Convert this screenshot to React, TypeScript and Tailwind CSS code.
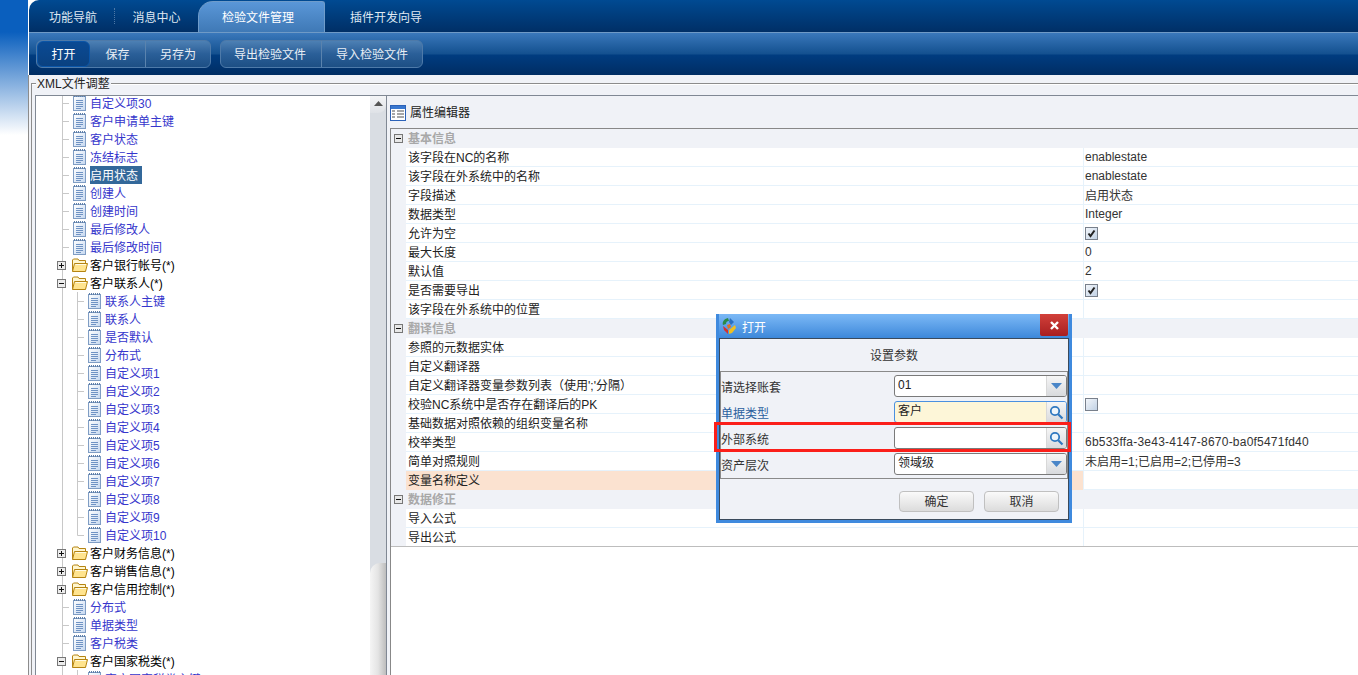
import React from "react";

const Note = () => (
  <svg width="14" height="16" viewBox="0 0 14 16" className="shrink-0">
    <defs>
      <linearGradient id="ng" x1="0" y1="0" x2="1" y2="1">
        <stop offset="0" stopColor="#ffffff" />
        <stop offset="1" stopColor="#c5d8f0" />
      </linearGradient>
    </defs>
    <rect x="0.5" y="1.5" width="12" height="14" fill="url(#ng)" stroke="#7f9dc4" />
    <path d="M1 1h11" stroke="#5f7fa8" strokeDasharray="1 1" strokeWidth="2" />
    <path d="M3 5.5h7M3 7.5h7M3 9.5h7M3 11.5h7M3 13.5h5" stroke="#6f93c4" />
  </svg>
);

const Folder = () => (
  <svg width="16" height="14" viewBox="0 0 16 14" className="shrink-0">
    <path d="M0.5 13 V2 L1.5 1 H6 L7 2.5 H13.5 V13 Z" fill="#fff6cf" stroke="#b58412" />
    <path d="M0.5 13.5 L2.5 5.5 H15.5 L13.5 13.5 Z" fill="#ffe48f" stroke="#b58412" />
    <path d="M3.5 6.5 H14" stroke="#fffbe6" />
  </svg>
);

const Box = ({ open, size = 9 }: { open?: boolean; size?: number }) => (
  <svg width={size} height={size} viewBox="0 0 9 9" className="shrink-0">
    <rect x="0.5" y="0.5" width="8" height="8" fill="#e8e8e8" stroke="#777" />
    <path d="M2 4.5h5" stroke="#111" />
    {!open && <path d="M4.5 2v5" stroke="#111" />}
  </svg>
);

type Kind = "leaf2" | "leaf3" | "leaf3end" | "plus" | "minus";

const Gutter = ({ kind }: { kind: Kind }) => {
  const w = kind === "leaf2" ? 37 : kind === "plus" || kind === "minus" ? 36 : 52;
  return (
    <svg width={w} height="18" className="shrink-0">
      <path d="M26.5 0V18" stroke="#c8c8c8" />
      {kind === "leaf2" && <path d="M26 9.5h7" stroke="#c8c8c8" />}
      {kind === "leaf3" && <path d="M41.5 0V18M41 9.5h7" stroke="#c8c8c8" />}
      {kind === "leaf3end" && <path d="M41.5 0V9.5H48" stroke="#c8c8c8" fill="none" />}
      {(kind === "plus" || kind === "minus") && (
        <g transform="translate(21,5)">
          <rect x="0.5" y="0.5" width="8" height="8" fill="#ececec" stroke="#777" />
          <path d="M2 4.5h5" stroke="#111" />
          {kind === "plus" && <path d="M4.5 2v5" stroke="#111" />}
        </g>
      )}
    </svg>
  );
};

const tree: { k: Kind; t: string; star?: boolean; sel?: boolean }[] = [
  { k: "leaf2", t: "自定义项30" },
  { k: "leaf2", t: "客户申请单主键" },
  { k: "leaf2", t: "客户状态" },
  { k: "leaf2", t: "冻结标志" },
  { k: "leaf2", t: "启用状态", sel: true },
  { k: "leaf2", t: "创建人" },
  { k: "leaf2", t: "创建时间" },
  { k: "leaf2", t: "最后修改人" },
  { k: "leaf2", t: "最后修改时间" },
  { k: "plus", t: "客户银行帐号", star: true },
  { k: "minus", t: "客户联系人", star: true },
  { k: "leaf3", t: "联系人主键" },
  { k: "leaf3", t: "联系人" },
  { k: "leaf3", t: "是否默认" },
  { k: "leaf3", t: "分布式" },
  { k: "leaf3", t: "自定义项1" },
  { k: "leaf3", t: "自定义项2" },
  { k: "leaf3", t: "自定义项3" },
  { k: "leaf3", t: "自定义项4" },
  { k: "leaf3", t: "自定义项5" },
  { k: "leaf3", t: "自定义项6" },
  { k: "leaf3", t: "自定义项7" },
  { k: "leaf3", t: "自定义项8" },
  { k: "leaf3", t: "自定义项9" },
  { k: "leaf3end", t: "自定义项10" },
  { k: "plus", t: "客户财务信息", star: true },
  { k: "plus", t: "客户销售信息", star: true },
  { k: "plus", t: "客户信用控制", star: true },
  { k: "leaf2", t: "分布式" },
  { k: "leaf2", t: "单据类型" },
  { k: "leaf2", t: "客户税类" },
  { k: "minus", t: "客户国家税类", star: true },
  { k: "leaf3", t: "客户国家税类主键" },
];

const TreeRow = ({ k, t, star, sel }: (typeof tree)[number]) => {
  const folder = k === "plus" || k === "minus";
  return (
    <div className="flex h-[18px] items-center whitespace-nowrap">
      <Gutter kind={k} />
      {folder ? <Folder /> : <Note />}
      <span
        className={
          folder
            ? "ml-[2px] h-[18px] leading-[20px] text-black"
            : sel
            ? "ml-[3px] h-[18px] bg-[#33689a] pr-[4px] leading-[20px] text-white"
            : "ml-[3px] h-[18px] leading-[20px] text-[#3636cc]"
        }
      >
        {t}
        {star ? "(*)" : ""}
      </span>
    </div>
  );
};

type Prop =
  | { s: string }
  | { n: string; v?: string; c?: boolean; off?: boolean; sel?: boolean };

const props: Prop[] = [
  { s: "基本信息" },
  { n: "该字段在NC的名称", v: "enablestate" },
  { n: "该字段在外系统中的名称", v: "enablestate" },
  { n: "字段描述", v: "启用状态" },
  { n: "数据类型", v: "Integer" },
  { n: "允许为空", c: true },
  { n: "最大长度", v: "0" },
  { n: "默认值", v: "2" },
  { n: "是否需要导出", c: true },
  { n: "该字段在外系统中的位置" },
  { s: "翻译信息" },
  { n: "参照的元数据实体" },
  { n: "自定义翻译器" },
  { n: "自定义翻译器变量参数列表（使用';'分隔）" },
  { n: "校验NC系统中是否存在翻译后的PK", off: true },
  { n: "基础数据对照依赖的组织变量名称" },
  { n: "校举类型", v: "6b533ffa-3e43-4147-8670-ba0f5471fd40" },
  { n: "简单对照规则", v: "未启用=1;已启用=2;已停用=3" },
  { n: "变量名称定义", sel: true },
  { s: "数据修正" },
  { n: "导入公式" },
  { n: "导出公式" },
];

const Check = ({ on }: { on?: boolean }) => (
  <svg width="13" height="13" viewBox="0 0 13 13">
    <defs>
      <linearGradient id="cg" x1="0" y1="0" x2="1" y2="1">
        <stop offset="0" stopColor="#f4f7fb" />
        <stop offset="1" stopColor="#bfd0e4" />
      </linearGradient>
    </defs>
    <rect x="0.5" y="0.5" width="12" height="12" fill="url(#cg)" stroke="#78808c" />
    {on && <path d="M3.5 6.5l2 2.5 4-5.5" fill="none" stroke="#222" strokeWidth="2" />}
  </svg>
);

const valueClass = (v?: string) => {
  if (!v) return "";
  if (v.startsWith("6b533")) return "tracking-[0.22px]";
  if (/[\u4e00-\u9fff]/.test(v)) return "h-[18px] leading-[20px]";
  return "";
};

const PropRow = ({ p }: { p: Prop }) => {
  if ("s" in p) {
    return (
      <div className="flex h-[19px] items-center bg-[#f0f2f7]">
        <span className="ml-[3px] flex w-[13px]">
          <Box open />
        </span>
        <span className="ml-[1px] font-bold text-[#a8a8a8]">{p.s}</span>
      </div>
    );
  }
  return (
    <div className="flex h-[19px]">
      <div className="w-[15px] shrink-0 bg-[#f0f2f7]" />
      <div
        className={
          p.sel
            ? "w-[677px] shrink-0 bg-[#fbe2d0] pl-[2px] leading-[20px] text-[#222]"
            : "w-[677px] shrink-0 border-b border-[#e6f2fb] pl-[2px] leading-[20px] text-[#222]"
        }
      >
        {p.n}
      </div>
      <div className="flex flex-1 items-center border-b border-l border-[#e6f2fb] pl-[1px] leading-[18px] text-[#333]">
        {p.c ? <Check on /> : p.off ? <Check /> : <span className={valueClass(p.v)}>{p.v}</span>}
      </div>
    </div>
  );
};

const Triangle = () => (
  <svg width="11" height="6" viewBox="0 0 11 6">
    <path d="M0 0h11L5.5 6z" fill="#4a86c8" />
  </svg>
);
const Lens = () => (
  <svg width="15" height="15" viewBox="0 0 15 15" fill="none">
    <circle cx="6" cy="6" r="4.2" stroke="#2f78c0" strokeWidth="1.8" fill="#eef5fb" />
    <path d="M9.2 9.2l4.3 4.3" stroke="#2f78c0" strokeWidth="2.2" />
  </svg>
);

const Field = ({
  label,
  value,
  btn,
  hl,
  link,
}: {
  label: string;
  value?: string;
  btn: "drop" | "find";
  hl?: boolean;
  link?: boolean;
}) => (
  <div className="flex h-[26px] items-center">
    <span className={link ? "mt-[4px] w-[173px] shrink-0 text-[#2b5f9e]" : "mt-[4px] w-[173px] shrink-0 text-[#333]"}>
      {label}
    </span>
    <div
      className={
        hl
          ? "flex h-[22px] w-[173px] overflow-hidden rounded-[3px] border border-[#4a90e0] bg-[#fdf6d8]"
          : "flex h-[22px] w-[173px] overflow-hidden rounded-[3px] border border-[#7a7a7a] bg-white"
      }
    >
      <span className="flex-1 pl-[3px] leading-[18px] text-[#222]">{value}</span>
      <span className="flex w-[20px] items-center justify-center border-l border-[#d8d8d8] bg-gradient-to-b from-[#f6f6f6] to-[#d8dadd]">
        {btn === "drop" ? <Triangle /> : <Lens />}
      </span>
    </div>
  </div>
);

const Logo = () => (
  <svg width="15" height="16" viewBox="0 0 15 16">
    <path d="M6 0C2 1 0 4 1 7l3-1C4 4 5 3 7 3z" fill="#2a8a4a" />
    <path d="M8 0l4 4-3 3-2-3z" fill="#2a6fc0" />
    <path d="M1 8l5 4v4L2 12z" fill="#d8302a" />
    <path d="M7 12l6-5 1 3-4 5-3 1z" fill="#f0c020" />
    <path d="M5 7l3-1 1 3-3 2z" fill="#e07020" />
  </svg>
);

export default function App() {
  return (
    <div className="flex h-[675px] w-[1358px] overflow-hidden bg-white font-['Liberation_Sans','Noto_Sans_CJK_SC',sans-serif] text-[12px]">
      <div className="h-[140px] w-[28px] shrink-0 bg-[linear-gradient(#0a5fbe_0,#0a5fbe_32px,#ffffff_135px)]" />
      <div className="flex min-w-0 flex-1 flex-col">
        {/* tabs */}
        <div className="ml-[1px] flex h-[32px] shrink-0 items-end rounded-tl-[10px] bg-gradient-to-b from-[#004a92] to-[#002f66] text-[#dfe8f2]">
          <div className="flex h-[32px] w-[85px] items-center justify-end pr-[17px] pt-[3px]">功能导航</div>
          <div className="h-[16px] self-center border-l border-dotted border-[#4d78a6]" />
          <div className="flex h-[32px] w-[83px] items-center justify-center pt-[3px]">消息中心</div>
          <div className="flex h-[31px] w-[127px] items-center justify-center rounded-tl-[15px] rounded-tr-[3px] border-x border-t border-[#6f9cca] bg-gradient-to-b from-[#5a97d8] to-[#3f79b6] pr-[7px] pt-[2px] text-white">
            检验文件管理
          </div>
          <div className="flex h-[32px] items-center pl-[25px] pt-[3px]">插件开发向导</div>
        </div>
        {/* toolbar */}
        <div className="ml-[1px] flex h-[43px] shrink-0 items-start gap-[9px] border-t border-[#6f9ac6] bg-[linear-gradient(#3a78bb_0,#13508f_21px,#003c80_22px,#002d63_100%)] pl-[7px] pt-[7px] text-[#e8eef5]">
          <div className="flex h-[28px] overflow-hidden rounded-[6px] border border-[#4e7aa9] bg-gradient-to-b from-[#4d80b4] via-[#2a5f98] to-[#1d4f85]">
            <div className="flex w-[53px] items-center justify-center rounded-[6px] border border-[#0a55a8] bg-gradient-to-b from-[#0a4a94] to-[#0a4180] pt-[1px] text-white">打开</div>
            <div className="flex w-[55px] items-center justify-center pt-[2px]">保存</div>
            <div className="flex w-[65px] items-center justify-center border-l border-[#5a83ae] pt-[2px]">另存为</div>
          </div>
          <div className="flex h-[28px] overflow-hidden rounded-[6px] border border-[#4e7aa9] bg-gradient-to-b from-[#4d80b4] via-[#2a5f98] to-[#1d4f85]">
            <div className="flex w-[100px] items-center justify-center pr-[2px] pt-[2px]">导出检验文件</div>
            <div className="flex w-[101px] items-center justify-center border-l border-[#5a83ae] pt-[2px]">导入检验文件</div>
          </div>
        </div>
        {/* body */}
        <div className="flex min-h-0 flex-1 flex-col border-l border-[#8c8c8c] bg-[#f0f2f7] pl-[2px] pt-[8px]">
          <div className="relative flex min-h-0 flex-1 flex-col border-l border-t border-[#8c8c8c] pl-[3px] pt-[11px] shadow-[inset_0_1px_0_#ffffff]">
            <span className="absolute left-[4px] top-[-7px] bg-[#f0f2f7] px-[1px] text-[12px] leading-[14px] text-[#222]">XML文件调整</span>
            <div className="flex min-h-0 flex-1 border-l border-t border-[#808894]">
              {/* tree */}
              <div className="flex w-[351px] shrink-0 border-r border-[#808894] bg-white">
                <div className="min-w-0 flex-1 overflow-hidden">
                  <div className="mt-[-2px]">
                    {tree.map((r, i) => (
                      <TreeRow key={i} {...r} />
                    ))}
                  </div>
                </div>
                <div className="flex w-[16px] shrink-0 flex-col justify-between bg-[#d9dde3]">
                  <div className="flex h-[17px] items-start justify-center rounded-br-[8px] bg-gradient-to-b from-[#f4f5f7] to-[#dfe2e7] pt-[5px]">
                    <svg width="9" height="5" viewBox="0 0 9 5"><path d="M4.5 0L9 5H0z" fill="#555" /></svg>
                  </div>
                  <div className="h-[112px] rounded-tl-[10px] bg-gradient-to-r from-[#f5f5f5] via-[#e4e4e4] to-[#bdbdbd]" />
                </div>
              </div>
              {/* right pane */}
              <div className="flex min-w-0 flex-1 flex-col">
                <div className="flex h-[32px] shrink-0 items-center gap-[4px] pl-[3px] pt-[1px] text-[#222]">
                  <svg width="16" height="16" viewBox="0 0 16 16">
                    <rect x="0.5" y="0.5" width="15" height="15" fill="#fff" stroke="#2c62b8" />
                    <rect x="1" y="1" width="14" height="3" fill="#3a78d0" />
                    <path d="M2 6h3M2 9h3M2 12h3M7 6h7M7 9h7M7 12h7" stroke="#8a8a8a" strokeWidth="1.6" />
                  </svg>
                  属性编辑器
                </div>
                <div className="ml-[3px] flex min-h-0 flex-1 flex-col border-l border-t border-[#888888] bg-white">
                  <div className="h-[418px] overflow-hidden border-b border-[#bdbdbd]">
                    {props.map((p, i) => (
                      <PropRow key={i} p={p} />
                    ))}
                  </div>
                </div>
              </div>
            </div>
          </div>
        </div>
      </div>

      {/* dialog */}
      <div className="absolute left-[716px] top-[314px] flex h-[209px] w-[356px] flex-col bg-[#3f8ade] px-[3px] pb-[3px]">
        <div className="relative flex h-[24px] shrink-0 items-center gap-[5px] bg-gradient-to-b from-[#7cb9f6] to-[#3c88da] pl-[3px] text-white">
          <Logo />
          <span className="pt-[3px]">打开</span>
          <div className="absolute right-[1px] top-0 flex h-[22px] w-[28px] items-center justify-center rounded-b-[2px] bg-gradient-to-b from-[#d2403a] to-[#a81e20]">
            <svg width="9" height="9" viewBox="0 0 9 9"><path d="M1 1l7 7M8 1l-7 7" stroke="#fff" strokeWidth="2.4" /></svg>
          </div>
        </div>
        <div className="relative flex flex-1 flex-col border border-[#3a4a5c] bg-[#f0f2f7]">
          <div className="flex h-[32px] items-center justify-center pt-[2px] text-[#333]">设置参数</div>
          <div className="h-[108px] border border-[#8a8a8a] pt-[1px]">
            <Field label="请选择账套" value="01" btn="drop" />
            <Field label="单据类型" value="客户" btn="find" hl link />
            <Field label="外部系统" btn="find" />
            <Field label="资产层次" value="领域级" btn="drop" />
          </div>
          <div className="flex justify-end gap-[10px] pr-[9px] pt-[12px]">
            <div className="flex h-[21px] w-[75px] items-center justify-center rounded-[4px] border border-[#c0c0c0] bg-gradient-to-b from-[#fafafa] to-[#dcdcdc] text-[#333]">确定</div>
            <div className="flex h-[21px] w-[75px] items-center justify-center rounded-[4px] border border-[#c0c0c0] bg-gradient-to-b from-[#fafafa] to-[#dcdcdc] text-[#333]">取消</div>
          </div>
          <div className="absolute left-[-6px] top-[83px] h-[30px] w-[357px] border-[3px] border-[#fb1f1a]" />
        </div>
      </div>
    </div>
  );
}
